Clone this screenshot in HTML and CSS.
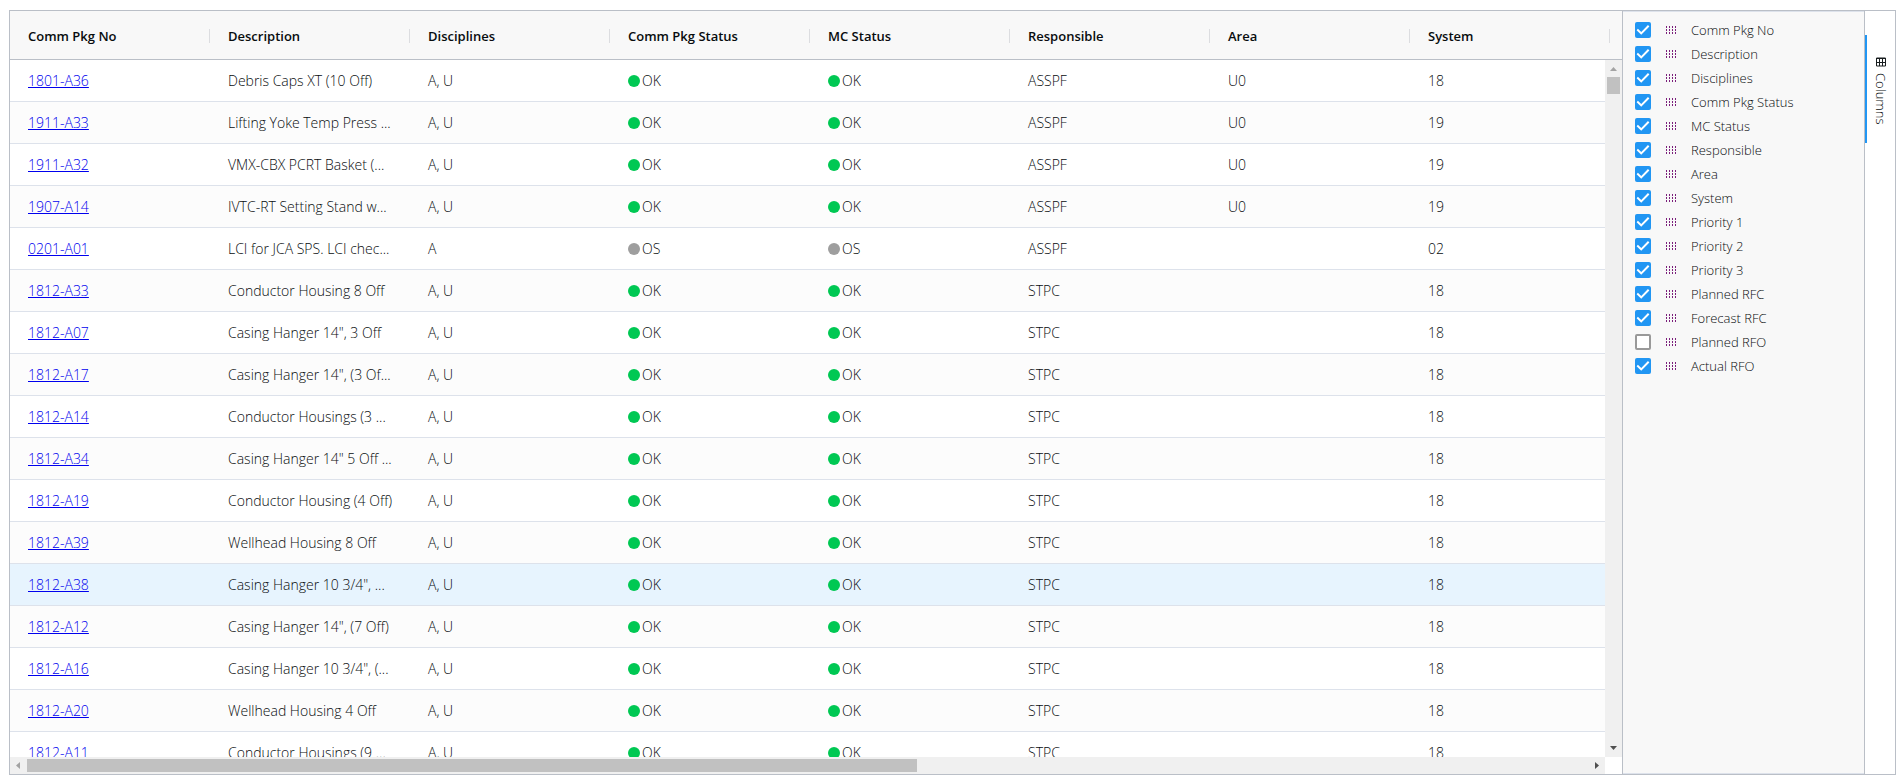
FILE: index.html
```html
<!DOCTYPE html>
<html lang="en">
<head>
<meta charset="utf-8">
<title>Comm Packages</title>
<link rel="stylesheet" href="styles.css">
</head>
<body>
<main class="grid">
<section class="data">
<div class="viewport">
<table class="table">
<thead><tr><th>Comm Pkg No</th><th>Description</th><th>Disciplines</th><th>Comm Pkg Status</th><th>MC Status</th><th>Responsible</th><th>Area</th><th>System</th></tr></thead>
<tbody>
<tr><td><a href="#">1801-A36</a></td><td>Debris Caps XT (10 Off)</td><td>A, U</td><td><i class="dot"></i>OK</td><td><i class="dot"></i>OK</td><td>ASSPF</td><td>U0</td><td>18</td></tr>
<tr><td><a href="#">1911-A33</a></td><td>Lifting Yoke Temp Press ...</td><td>A, U</td><td><i class="dot"></i>OK</td><td><i class="dot"></i>OK</td><td>ASSPF</td><td>U0</td><td>19</td></tr>
<tr><td><a href="#">1911-A32</a></td><td>VMX-CBX PCRT Basket (...</td><td>A, U</td><td><i class="dot"></i>OK</td><td><i class="dot"></i>OK</td><td>ASSPF</td><td>U0</td><td>19</td></tr>
<tr><td><a href="#">1907-A14</a></td><td>IVTC-RT Setting Stand w...</td><td>A, U</td><td><i class="dot"></i>OK</td><td><i class="dot"></i>OK</td><td>ASSPF</td><td>U0</td><td>19</td></tr>
<tr><td><a href="#">0201-A01</a></td><td>LCI for JCA SPS. LCI chec...</td><td>A</td><td><i class="dot dot-os"></i>OS</td><td><i class="dot dot-os"></i>OS</td><td>ASSPF</td><td></td><td>02</td></tr>
<tr><td><a href="#">1812-A33</a></td><td>Conductor Housing 8 Off</td><td>A, U</td><td><i class="dot"></i>OK</td><td><i class="dot"></i>OK</td><td>STPC</td><td></td><td>18</td></tr>
<tr><td><a href="#">1812-A07</a></td><td>Casing Hanger 14", 3 Off</td><td>A, U</td><td><i class="dot"></i>OK</td><td><i class="dot"></i>OK</td><td>STPC</td><td></td><td>18</td></tr>
<tr><td><a href="#">1812-A17</a></td><td>Casing Hanger 14", (3 Of...</td><td>A, U</td><td><i class="dot"></i>OK</td><td><i class="dot"></i>OK</td><td>STPC</td><td></td><td>18</td></tr>
<tr><td><a href="#">1812-A14</a></td><td>Conductor Housings (3 ...</td><td>A, U</td><td><i class="dot"></i>OK</td><td><i class="dot"></i>OK</td><td>STPC</td><td></td><td>18</td></tr>
<tr><td><a href="#">1812-A34</a></td><td>Casing Hanger 14" 5 Off ...</td><td>A, U</td><td><i class="dot"></i>OK</td><td><i class="dot"></i>OK</td><td>STPC</td><td></td><td>18</td></tr>
<tr><td><a href="#">1812-A19</a></td><td>Conductor Housing (4 Off)</td><td>A, U</td><td><i class="dot"></i>OK</td><td><i class="dot"></i>OK</td><td>STPC</td><td></td><td>18</td></tr>
<tr><td><a href="#">1812-A39</a></td><td>Wellhead Housing 8 Off</td><td>A, U</td><td><i class="dot"></i>OK</td><td><i class="dot"></i>OK</td><td>STPC</td><td></td><td>18</td></tr>
<tr class="active"><td><a href="#">1812-A38</a></td><td>Casing Hanger 10 3/4", ...</td><td>A, U</td><td><i class="dot"></i>OK</td><td><i class="dot"></i>OK</td><td>STPC</td><td></td><td>18</td></tr>
<tr><td><a href="#">1812-A12</a></td><td>Casing Hanger 14", (7 Off)</td><td>A, U</td><td><i class="dot"></i>OK</td><td><i class="dot"></i>OK</td><td>STPC</td><td></td><td>18</td></tr>
<tr><td><a href="#">1812-A16</a></td><td>Casing Hanger 10 3/4", (...</td><td>A, U</td><td><i class="dot"></i>OK</td><td><i class="dot"></i>OK</td><td>STPC</td><td></td><td>18</td></tr>
<tr><td><a href="#">1812-A20</a></td><td>Wellhead Housing 4 Off</td><td>A, U</td><td><i class="dot"></i>OK</td><td><i class="dot"></i>OK</td><td>STPC</td><td></td><td>18</td></tr>
<tr><td><a href="#">1812-A11</a></td><td>Conductor Housings (9 ...</td><td>A, U</td><td><i class="dot"></i>OK</td><td><i class="dot"></i>OK</td><td>STPC</td><td></td><td>18</td></tr>
</tbody>
</table>
</div>
<div class="vscroll">
<svg class="arrow" width="17" height="17"><path d="M5 11h7L8.500 7z" fill="#a3a3a3"/></svg>
<span class="vthumb"></span>
<svg class="arrow" width="17" height="17"><path d="M5 6h7L8.500 10z" fill="#505050"/></svg>
</div>
<div class="hscroll">
<svg class="arrow" width="17" height="17"><path d="M10 5v7L6 8.500z" fill="#a3a3a3"/></svg>
<span class="htrack"><span class="hthumb"></span></span>
<svg class="arrow" width="17" height="17"><path d="M7 5v7l4-3.500z" fill="#505050"/></svg>
</div>
</section>
<aside class="panel">
<svg class="defs" width="0" height="0"><defs><g id="grip" fill="#7b1f7b"><path d="M0 0h1v2h-1zM3 0h1v2h-1zM6 0h1v2h-1zM9 0h1v2h-1zM0 3h1v2h-1zM3 3h1v2h-1zM6 3h1v2h-1zM9 3h1v2h-1zM0 6h1v2h-1zM3 6h1v2h-1zM6 6h1v2h-1zM9 6h1v2h-1z"/></g></defs></svg>
<label class="item"><input type="checkbox" checked><svg class="grip"><use href="#grip"/></svg>Comm Pkg No</label>
<label class="item"><input type="checkbox" checked><svg class="grip"><use href="#grip"/></svg>Description</label>
<label class="item"><input type="checkbox" checked><svg class="grip"><use href="#grip"/></svg>Disciplines</label>
<label class="item"><input type="checkbox" checked><svg class="grip"><use href="#grip"/></svg>Comm Pkg Status</label>
<label class="item"><input type="checkbox" checked><svg class="grip"><use href="#grip"/></svg>MC Status</label>
<label class="item"><input type="checkbox" checked><svg class="grip"><use href="#grip"/></svg>Responsible</label>
<label class="item"><input type="checkbox" checked><svg class="grip"><use href="#grip"/></svg>Area</label>
<label class="item"><input type="checkbox" checked><svg class="grip"><use href="#grip"/></svg>System</label>
<label class="item"><input type="checkbox" checked><svg class="grip"><use href="#grip"/></svg>Priority 1</label>
<label class="item"><input type="checkbox" checked><svg class="grip"><use href="#grip"/></svg>Priority 2</label>
<label class="item"><input type="checkbox" checked><svg class="grip"><use href="#grip"/></svg>Priority 3</label>
<label class="item"><input type="checkbox" checked><svg class="grip"><use href="#grip"/></svg>Planned RFC</label>
<label class="item"><input type="checkbox" checked><svg class="grip"><use href="#grip"/></svg>Forecast RFC</label>
<label class="item"><input type="checkbox"><svg class="grip"><use href="#grip"/></svg>Planned RFO</label>
<label class="item"><input type="checkbox" checked><svg class="grip"><use href="#grip"/></svg>Actual RFO</label>
</aside>
<nav class="tabs">
<button class="tab" type="button"><svg width="10" height="10"><path d="M.5 1h9v8h-9zM0 1.500h10M3.500 1v8M6.500 1v8M0 5.500h10" fill="none" stroke="#181d1f"/></svg><span>Columns</span></button>
</nav>
</main>
</body>
</html>
```

FILE: styles.css
```css
* { box-sizing: border-box; }
body {
  margin: 0;
  height: 100vh;
  padding: 10px 7px 8px 9px;
  display: flex;
  background: #fff;
  color: #080c0e;
  font: 300 13px/20px "Open Sans", "Noto Sans", sans-serif;
}
.grid {
  flex: 1;
  min-width: 0;
  display: flex;
  border: 1px solid #babfc7;
}
.data {
  flex: 1;
  min-width: 0;
  display: grid;
  grid-template-columns: minmax(0, 1fr) 17px;
  grid-template-rows: 49px minmax(0, 1fr) 17px;
}
.viewport {
  grid-area: 1 / 1 / 3 / 3;
  overflow: hidden;
}
.table, .table thead, .table tbody { display: block; }
.table tr {
  display: flex;
  height: 42px;
  overflow: hidden;
  border-bottom: 1px solid #dde2eb;
}
.table thead tr {
  height: 49px;
  padding-top: 2px;
  background: #f8f8f8;
  border-color: #babfc7;
}
.table tbody tr:nth-child(even) { background: #fcfcfc; }
.table tbody tr.active { background: #e7f4fe; }
.table th, .table td {
  flex: none;
  width: 200px;
  padding: 0 18px;
  display: flex;
  align-items: center;
  white-space: nowrap;
}
.table td { font-size: 14px; }
.table th {
  padding-right: 0;
  justify-content: space-between;
  font-weight: 600;
}
.table th::after {
  content: "";
  width: 1px;
  height: 14px;
  background: #dcdde0;
}
.table a { color: #0000ee; }
.dot {
  width: 12px;
  height: 12px;
  margin-right: 2px;
  border-radius: 50%;
  background: #00c853;
}
.dot-os { background: #9e9e9e; }
.arrow { display: block; flex: none; }
.vscroll {
  grid-area: 2 / 2;
  display: flex;
  flex-direction: column;
  background: #f0f0f0;
}
.vthumb {
  height: 17px;
  margin: 0 2px auto;
  background: #c1c1c1;
}
.hscroll {
  grid-area: 3 / 1;
  display: flex;
  background: #f0f0f0;
}
.htrack { flex: 1; display: flex; padding: 2px 0; }
.hthumb { width: 57%; background: #c1c1c1; }
.panel {
  flex: none;
  width: 243px;
  padding: 7px 12px;
  border: solid #babfc7;
  border-width: 0 1px;
  background: #f8f8f8;
  box-shadow: inset 0 1px #dde2eb, inset 0 -1px #dde2eb;
}
.defs { display: block; }
.item {
  display: flex;
  align-items: center;
  height: 24px;
  line-height: 22px;
}
.item input {
  appearance: none;
  width: 16px;
  height: 16px;
  margin: 0 15px 0 0;
  border: 2px solid #999;
  border-radius: 2px;
  background: #fff;
}
.item input:checked {
  border: 0;
  background: #2196f3;
}
.item input:checked::before {
  content: "";
  display: block;
  height: 16px;
  background: #fff;
  clip-path: polygon(39% 80%, 10% 51%, 18% 42%, 39% 62%, 81% 19%, 90% 28%);
}
.grip { width: 10px; height: 8px; margin-right: 15px; }
.tabs {
  flex: none;
  width: 30px;
  padding-top: 24px;
}
.tab {
  width: 30px;
  height: 108px;
  padding: 22px 0 0;
  display: flex;
  flex-direction: column;
  align-items: center;
  gap: 6px;
  border: 0;
  border-left: 2px solid #2196f3;
  background: none;
  color: inherit;
  font: inherit;
}
.tab svg { flex: none; }
.tab span { writing-mode: vertical-rl; }
```
